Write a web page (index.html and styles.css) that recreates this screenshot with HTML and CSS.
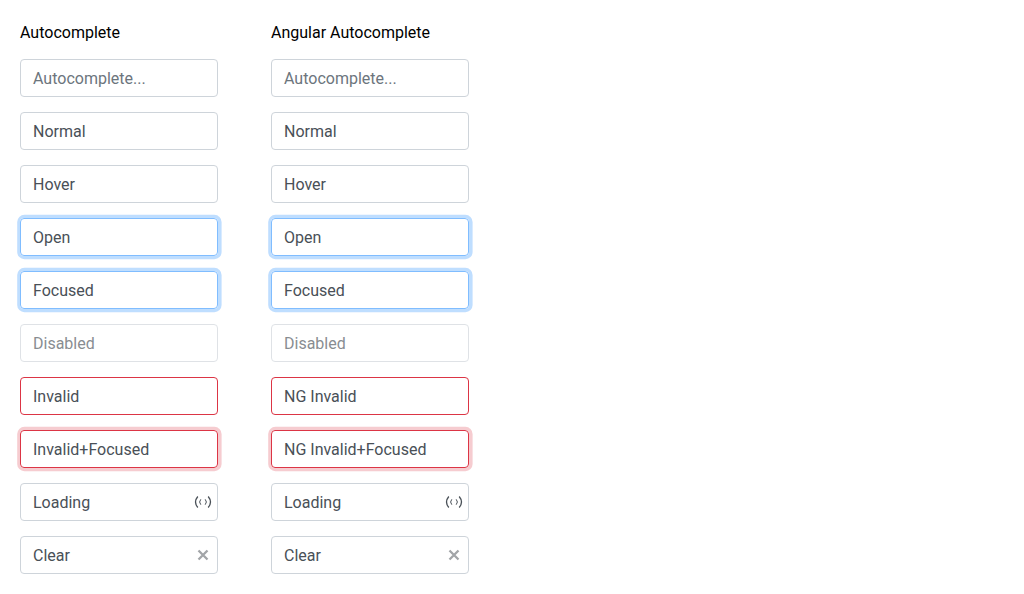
FILE: index.html
```html
<!DOCTYPE html>
<html lang="en">
<head>
<meta charset="utf-8">
<title>Autocomplete</title>
<link rel="stylesheet" href="styles.css">
</head>
<body>
<main class="columns">
  <section class="column">
    <h2 class="title">Autocomplete</h2>
    <div class="field placeholder"><span class="value">Autocomplete...</span></div>
    <div class="field"><span class="value">Normal</span></div>
    <div class="field"><span class="value">Hover</span></div>
    <div class="field focused"><span class="value">Open</span></div>
    <div class="field focused"><span class="value">Focused</span></div>
    <div class="field disabled"><span class="value">Disabled</span></div>
    <div class="field invalid"><span class="value">Invalid</span></div>
    <div class="field invalid invalid-focused"><span class="value">Invalid+Focused</span></div>
    <div class="field"><span class="value">Loading</span><svg class="icon loading" viewBox="0 0 18 16"><path class="outer" d="M3.8 2.5Q-.8 8 3.8 13.5M14.2 2.5Q18.8 8 14.2 13.5"/><path d="M6.8 5.3Q4.4 8 6.8 10.7M11.2 5.3Q13.6 8 11.2 10.7"/></svg></div>
    <div class="field"><span class="value">Clear</span><svg class="icon clear" viewBox="0 0 16 16"><path d="M3.5 3.5l9 9M12.5 3.5l-9 9"/></svg></div>
  </section>
  <section class="column">
    <h2 class="title">Angular Autocomplete</h2>
    <div class="field placeholder"><span class="value">Autocomplete...</span></div>
    <div class="field"><span class="value">Normal</span></div>
    <div class="field"><span class="value">Hover</span></div>
    <div class="field focused"><span class="value">Open</span></div>
    <div class="field focused"><span class="value">Focused</span></div>
    <div class="field disabled"><span class="value">Disabled</span></div>
    <div class="field invalid"><span class="value">NG Invalid</span></div>
    <div class="field invalid invalid-focused"><span class="value">NG Invalid+Focused</span></div>
    <div class="field"><span class="value">Loading</span><svg class="icon loading" viewBox="0 0 18 16"><path class="outer" d="M3.8 2.5Q-.8 8 3.8 13.5M14.2 2.5Q18.8 8 14.2 13.5"/><path d="M6.8 5.3Q4.4 8 6.8 10.7M11.2 5.3Q13.6 8 11.2 10.7"/></svg></div>
    <div class="field"><span class="value">Clear</span><svg class="icon clear" viewBox="0 0 16 16"><path d="M3.5 3.5l9 9M12.5 3.5l-9 9"/></svg></div>
  </section>
</main>
</body>
</html>
```
FILE: styles.css
```css
* { box-sizing: border-box; }
body { margin: 0; background: #fff; font: 16px/24px Roboto, sans-serif; color: #495057; }
.columns { display: flex; gap: 53px; padding: 20px; }
.column { display: flex; flex-direction: column; gap: 15px; width: 198px; }
.title { margin: 0; padding-top: 1px; height: 24px; font-size: 16px; font-weight: 400; line-height: 24px; color: #000; }
.field { display: flex; align-items: center; justify-content: space-between; height: 38px; padding: 0 5px 0 12px; border: 1px solid #ced4da; border-radius: 4px; white-space: nowrap; }
.value { padding-top: 2px; }
.placeholder { color: #6c757d; }
.focused { border-color: #80bdff; box-shadow: .4px 0 0 3.2px rgba(0, 123, 255, .25); }
.disabled { opacity: .65; }
.invalid { border-color: #dc3545; }
.invalid-focused { box-shadow: .4px 0 0 3.2px rgba(220, 53, 69, .25); }
.icon { fill: none; stroke: #495057; }
.loading { width: 18px; height: 16px; }
.outer { stroke-width: 1.3; }
.clear { width: 16px; height: 16px; margin-right: 1px; stroke: #a2a5a8; stroke-width: 2.3; }
```
